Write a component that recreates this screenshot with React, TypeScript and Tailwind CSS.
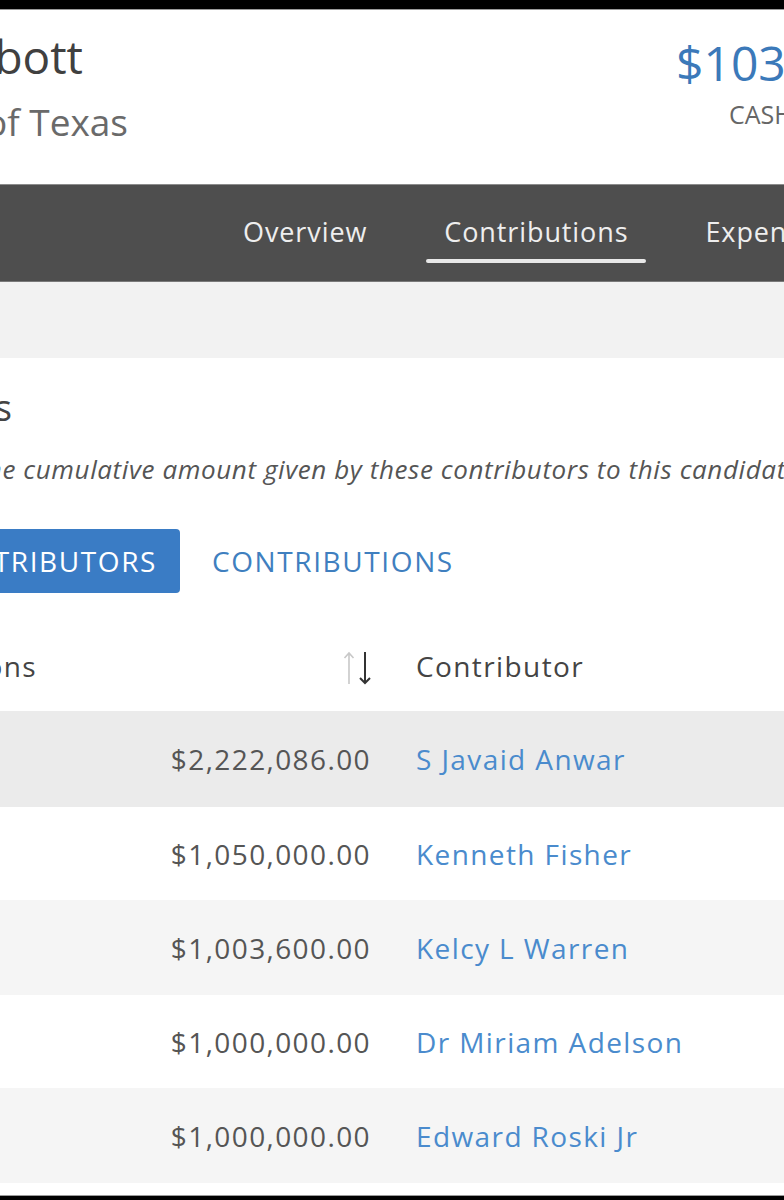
import React from 'react';

const rows = [
  { amount: '$2,222,086.00', name: 'S Javaid Anwar', bg: 'bg-[#ebebeb]', h: 'h-[96px]' },
  { amount: '$1,050,000.00', name: 'Kenneth Fisher', bg: 'bg-white', h: 'h-[93px]' },
  { amount: '$1,003,600.00', name: 'Kelcy L Warren', bg: 'bg-[#f5f5f5]', h: 'h-[95px]' },
  { amount: '$1,000,000.00', name: 'Dr Miriam Adelson', bg: 'bg-white', h: 'h-[93px]' },
  { amount: '$1,000,000.00', name: 'Edward Roski Jr', bg: 'bg-[#f5f5f5]', h: 'h-[95px]' },
];

function SortIcon() {
  return (
    <svg width="36" height="40" viewBox="0 0 36 40" fill="none">
      {/* up arrow, faded */}
      <path d="M8 36V5M3.5 10L8 5l4.5 5" stroke="#c8c8c8" strokeWidth="1.6" />
      {/* down arrow, active */}
      <path d="M24 4v31M19 30l5 5 5-5" stroke="#333" strokeWidth="2" />
    </svg>
  );
}

export default function App() {
  return (
    <div
      className="w-[784px] h-[1200px] overflow-hidden bg-white flex flex-col"
      style={{ fontFamily: '"Open Sans", "Noto Sans", sans-serif' }}
    >
      {/* top black strip */}
      <div className="h-[10px] bg-black border-b border-[#9a9a9a] shrink-0" />

      {/* Candidate header */}
      <div className="h-[174px] shrink-0 flex">
        <div className="w-[676px] shrink-0 pt-[23px]">
          <div className="w-[83px] flex justify-end">
            <span className="shrink-0 whitespace-nowrap text-[46px] leading-none text-[#404040]">Greg Abbott</span>
          </div>
          <div className="w-[128px] flex justify-end mt-[24px]">
            <span className="shrink-0 whitespace-nowrap text-[37px] leading-none text-[#6a6a6a]">Governor of Texas</span>
          </div>
        </div>
        <div className="shrink-0 pt-[29px]">
          <div className="whitespace-nowrap text-[48px] leading-none text-[#3b79b9]">$103,942,613</div>
          <div className="whitespace-nowrap text-[25px] leading-none text-[#666] mt-[15px] pl-[53px]">CASH ON HAND</div>
        </div>
      </div>

      {/* Nav */}
      <div className="h-[98px] shrink-0 bg-[#4e4e4e] border-t border-[#8c8c8c] border-b border-b-[#7a7a7a] flex pl-[225px] gap-[41px] pt-[33px] text-[27px] leading-none tracking-[0.9px] text-[#eeeeee]">
        <div className="px-[18px] whitespace-nowrap">Overview</div>
        <div className="flex flex-col">
          <div className="px-[18px] whitespace-nowrap">Contributions</div>
          <div className="h-[4px] bg-[#e8e8e8] mt-[14px] rounded-sm" />
        </div>
        <div className="px-[18px] whitespace-nowrap shrink-0">Expenditures</div>
      </div>

      {/* Grey band */}
      <div className="h-[76px] shrink-0 bg-[#f2f2f2]" />

      {/* Body */}
      <div className="flex flex-col pt-[32px]">
        <div className="w-[12px] flex justify-end">
          <span className="shrink-0 whitespace-nowrap text-[36px] leading-none text-[#444]">Top Contributors</span>
        </div>
        <div className="flex mt-[30px] text-[26px] leading-none italic text-[#555] whitespace-nowrap tracking-[0.6px]">
          <div className="w-[16px] flex justify-end">
            <span className="shrink-0">This list shows the</span>
          </div>
          <span className="shrink-0">&nbsp;cumulative amount given by these contributors to this candidate.</span>
        </div>

        {/* Tabs */}
        <div className="flex mt-[47px] gap-[9px] items-center text-[28px] tracking-[1.6px]">
          <div className="w-[180px] flex justify-end">
            <div className="shrink-0 h-[64px] flex items-center px-[23px] rounded-[4px] bg-[#3a7cc5] text-white whitespace-nowrap">
              TOP CONTRIBUTORS
            </div>
          </div>
          <div className="h-[64px] flex items-center px-[23px] text-[#3f7fbf] whitespace-nowrap">
            CONTRIBUTIONS
          </div>
        </div>

        {/* Table */}
        <div className="mt-[27px] flex flex-col text-[28px] tracking-[1.4px]">
          <div className="h-[91px] flex items-center text-[#444]">
            <div className="w-[392px] shrink-0 flex items-center">
              <div className="w-[37px] flex justify-end">
                <span className="shrink-0 whitespace-nowrap">Total Contributions</span>
              </div>
              <div className="ml-auto mr-[15px] mt-[4px]">
                <SortIcon />
              </div>
            </div>
            <div className="pl-[24px] whitespace-nowrap">Contributor</div>
          </div>
          {rows.map((r, i) => (
            <div key={i} className={`${r.h} ${r.bg} flex items-center`}>
              <div className="w-[392px] shrink-0 text-right pr-[21px] text-[#555]">{r.amount}</div>
              <div className="pl-[24px] text-[#4a8bcd] whitespace-nowrap">{r.name}</div>
            </div>
          ))}
        </div>
      </div>

      <div className="flex-1" />
      <div className="h-[5px] bg-black border-t border-[#9a9a9a] shrink-0" />
    </div>
  );
}
